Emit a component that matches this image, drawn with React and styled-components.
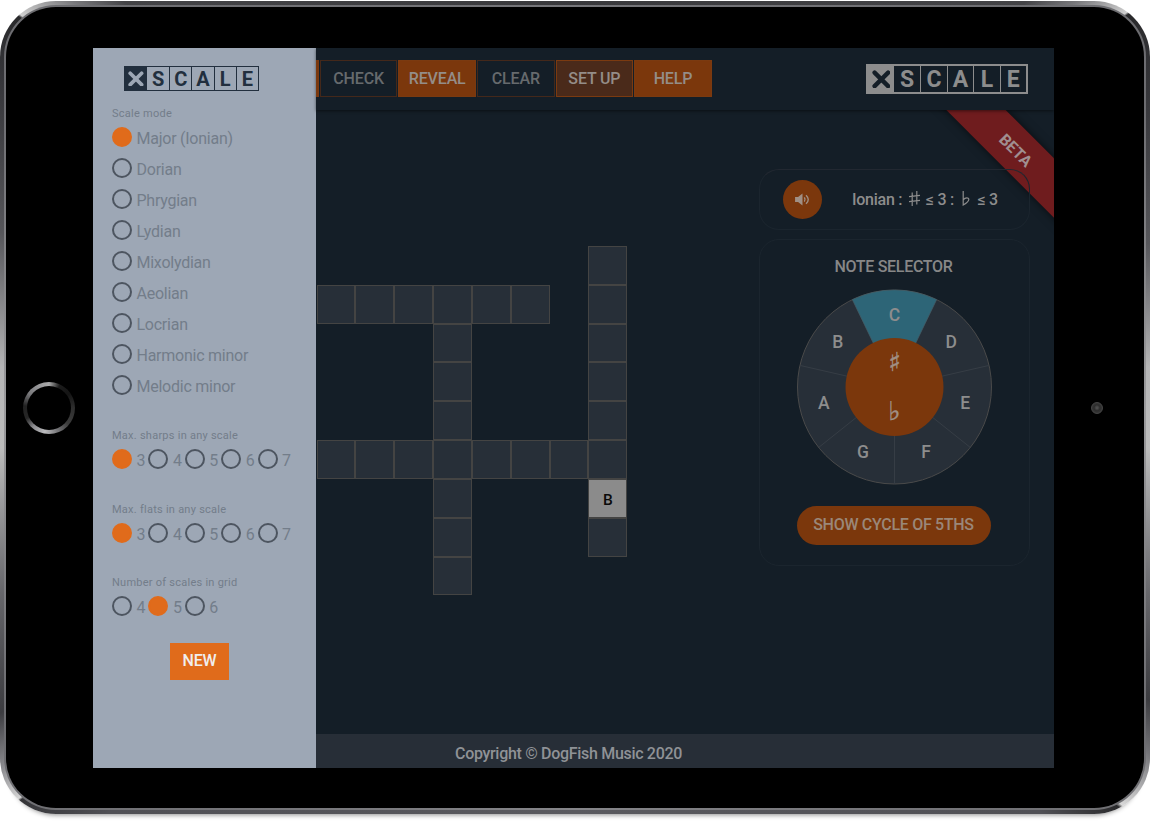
import React from "react";
import styled, { createGlobalStyle } from "styled-components";

const c = {
  night: "#141e27",
  slate: "#272f38",
  line: "#444443",
  orange: "#e06b1b",
  burnt: "#7b370c",
  text: "#8d8d8d",
  drawer: "#9da7b5",
  navy: "#222f3e",
};

const Global = createGlobalStyle`
  * { box-sizing: border-box; }
  body { margin: 0; background: #fff; font-family: Roboto, "Liberation Sans", sans-serif; overflow: hidden; }
`;

const Page = styled.div`
  width: 1152px;
  height: 830px;
  padding: 1px 0 0 0;
`;

const Frame = styled.div`
  width: 1150px;
  height: 813px;
  padding: 4px;
  border-radius: 56px;
  background: conic-gradient(
    #39393c 0deg, #444447 48deg, #77777a 51deg, #d0d0d0 54.4deg, #29292b 54.6deg,
    #38383c 62deg, #58585c 74deg, #b5b5b6 86deg, #bcbcbc 94deg, #68686c 108deg, #3c3c40 117deg,
    #747478 121deg, #d8d8d8 126deg, #29292b 126.3deg, #505055 131deg, #5a5a5f 180deg,
    #505055 229deg, #343437 234.7deg, #d4d4d4 234.9deg, #88888c 238deg, #3c3c40 242deg,
    #66666a 252deg, #bcbcbc 266deg, #b5b5b6 274deg, #56565a 287deg, #353539 300deg,
    #29292b 305.1deg, #d0d0d0 305.3deg, #77777a 309deg, #444447 312deg, #39393c 360deg
  );
  box-shadow: 0 9px 5px -8px rgba(0, 0, 0, 0.45);
`;

const Rim = styled.div`
  height: 100%;
  padding: 2px;
  border-radius: 52px;
  background: conic-gradient(#77777b 0deg, #6c6c70 62deg, #9b9b9d 90deg, #6c6c70 118deg, #858589 180deg, #6c6c70 242deg, #9b9b9d 270deg, #6c6c70 298deg, #77777b 360deg);
`;

const Glass = styled.div`
  height: 100%;
  display: grid;
  grid-template-columns: 87px 961px 1fr;
  padding-top: 41px;
  border-radius: 50px;
  background: #000;
`;

const Bezel = styled.div`
  display: flex;
  height: 719px;
  align-items: center;
  padding-left: ${(p) => p.$inset}px;
`;

const HomeButton = styled.div`
  width: 52px;
  height: 52px;
  padding: 4px;
  border-radius: 50%;
  background: conic-gradient(#aaa 0deg, #1c1c1c 25deg, #141414 55deg, #2e2e2e 90deg, #3c3c3c 130deg, #77777a 160deg, #bcbcbe 190deg, #8c8c90 220deg, #262626 245deg, #222 275deg, #77777a 305deg, #98989a 335deg, #aaa 360deg);
  &::after {
    content: "";
    display: block;
    height: 100%;
    border-radius: 50%;
    background: #000;
  }
`;

const Camera = styled.div`
  width: 12px;
  height: 12px;
  border-radius: 50%;
  border: 1px solid #464646;
  background: radial-gradient(circle at 50% 48%, #4c4c4c 0 12%, #2c2c2c 40%, #333 60%, #3c3c3c 100%);
`;

const Screen = styled.div`
  height: 720px;
  display: grid;
  grid-template-columns: 223px 738px;
  overflow: hidden;
  background: ${c.night};
`;

const Drawer = styled.aside`
  background: ${c.drawer};
  padding: 18px 0 0 19px;
`;

const Logo = styled.div`
  display: grid;
  width: ${(p) => (p.$small ? 135 : 162)}px;
  height: ${(p) => (p.$small ? 25 : 30)}px;
  grid-template-columns: ${(p) => (p.$small ? 22 : 26)}px repeat(5, 1fr);
  border: ${(p) => (p.$small ? 1.5 : 2)}px solid ${(p) => p.$ink};
  color: ${(p) => p.$ink};
  font-size: ${(p) => (p.$small ? 20 : 23)}px;
  font-weight: 700;
  ${(p) => p.$small && "margin-left: 12px;"}
`;

const LogoTile = styled.span`
  display: flex;
  align-items: center;
  justify-content: center;
  line-height: 1;
  & + & { border-left: 1.5px solid currentColor; }
`;

const LogoMark = styled.span`
  display: flex;
  align-items: center;
  justify-content: center;
  background: currentColor;
  svg { width: 72%; display: block; }
`;

const OptionGroup = styled.section`
  height: ${(p) => p.$height}px;
`;

const FirstGroup = styled.div`
  padding-top: 16px;
`;

const Caption = styled.div`
  font-size: 11px;
  line-height: 13px;
  letter-spacing: 0.25px;
  color: #737d8a;
`;

const Options = styled.div`
  display: flex;
  flex-direction: ${(p) => (p.$inline ? "row" : "column")};
  padding-top: 7px;
`;

const Option = styled.label`
  display: flex;
  align-items: center;
  gap: 4.5px;
  height: ${(p) => (p.$inline ? 20 : 31)}px;
  width: ${(p) => (p.$inline ? "36.4px" : "auto")};
  ${(p) => !p.$inline && "padding-bottom: 11px;"}
  font-size: 16px;
  letter-spacing: ${(p) => (p.$inline ? 0 : -0.25)}px;
  color: #737d8a;
  span { padding-top: 3px; line-height: 18px; white-space: nowrap; }
`;

const Radio = styled.i`
  flex: none;
  width: 20px;
  height: 20px;
  border-radius: 50%;
  border: 2px solid ${(p) => (p.$on ? c.orange : "#4d5560")};
  background: ${(p) => (p.$on ? c.orange : "transparent")};
`;

const NewButton = styled.button`
  display: block;
  width: 59px;
  height: 37px;
  margin-left: 58px;
  padding: 0 0 1px;
  border: 0;
  background: ${c.orange};
  color: #f0eeee;
  font: 500 16px Roboto, sans-serif;
  letter-spacing: -0.1px;
`;

const Main = styled.main`
  display: grid;
  grid-template-rows: 62px 1fr 34px;
  min-width: 0;
`;

const Header = styled.header`
  display: flex;
  justify-content: space-between;
  align-items: flex-start;
  padding: 12px 26px 0 0;
  box-shadow: 0 1px 3px rgba(0, 0, 0, 0.5);
  z-index: 1;
`;

const Toolbar = styled.nav`
  display: flex;
  gap: 1px;
`;

const fills = { solid: c.burnt, ghost: "transparent", active: "#4a2a1a" };

const ToolButton = styled.button`
  width: ${(p) => p.$width || 77.6}px;
  height: 37px;
  padding: 0 0 1px;
  border: 1px solid ${(p) => (p.$kind === "ghost" ? "#44281a" : "#7b3a10")};
  background: ${(p) => fills[p.$kind]};
  color: ${(p) => (p.$kind === "ghost" ? "#666a6d" : "#948d88")};
  font: 500 16px Roboto, sans-serif;
  letter-spacing: -0.15px;
`;

const LogoSlot = styled.div`
  padding-top: 4px;
`;

const Workspace = styled.div`
  position: relative;
  overflow: hidden;
  display: flex;
  justify-content: space-between;
`;

const Board = styled.div`
  display: grid;
  grid-template-columns: repeat(8, 38.85px);
  grid-template-rows: repeat(9, 38.82px);
  padding: 136px 0 0 0.5px;
`;

const Cell = styled.div`
  grid-column: ${(p) => p.$col};
  grid-row: ${(p) => p.$row};
  display: flex;
  align-items: center;
  justify-content: center;
  padding-top: 3px;
  border: 1px solid ${c.line};
  background: ${(p) => (p.$filled ? "#8b8b8b" : c.slate)};
  color: #0a0a0a;
  font-size: 15.5px;
  font-weight: 500;
`;

const Ribbon = styled.div`
  position: absolute;
  top: 19px;
  right: -62px;
  width: 200px;
  height: 42px;
  display: flex;
  align-items: center;
  justify-content: center;
  transform: rotate(45deg);
  background: #6f1c1e;
  color: #a08f90;
  font-size: 16px;
  font-weight: 700;
  box-shadow: 0 0 10px rgba(0, 0, 0, 0.6);
`;

const Side = styled.div`
  position: relative;
  width: 271px;
  margin: 59px 24px 0 0;
  display: flex;
  flex-direction: column;
  gap: 9px;
`;

const Card = styled.section`
  height: ${(p) => p.$height}px;
  border: 1px solid #1b252e;
  border-radius: 20px;
  color: ${c.text};
`;

const ScaleCard = styled(Card)`
  display: flex;
  align-items: center;
  padding-left: 23px;
  gap: 30px;
  border-top-color: #222831;
`;

const SoundButton = styled.button`
  width: 39px;
  height: 39px;
  display: flex;
  align-items: center;
  justify-content: center;
  padding: 0 0 1px;
  border: 0;
  border-radius: 50%;
  background: ${c.burnt};
`;

const ScaleText = styled.div`
  display: flex;
  align-items: center;
  font-size: 16px;
  font-weight: 500;
  letter-spacing: -0.25px;
  white-space: pre;
  line-height: 18px;
`;

const Accidental = styled.span`
  width: 16px;
  display: flex;
  justify-content: center;
  padding-bottom: 2px;
  svg { display: block; }
`;

const SelectorCard = styled(Card)`
  display: flex;
  flex-direction: column;
  align-items: center;
  padding-right: 2px;
`;

const Title = styled.h2`
  margin: 17px 0 0;
  font-size: 16px;
  line-height: 19px;
  font-weight: 500;
  letter-spacing: -0.3px;
  color: #878787;
`;

const Wheel = styled.svg`
  display: block;
  width: 196px;
  height: 196px;
  margin-top: 13px;
  text { text-anchor: middle; fill: ${c.text}; font-size: 17.5px; font-weight: 500; }
  .accidental { font-family: "DejaVu Sans", sans-serif; font-size: 26px; font-weight: 400; fill: #a09085; stroke: #a09085; stroke-width: 0.4; }
`;

const CycleButton = styled.button`
  width: 194px;
  height: 39px;
  margin-top: 21px;
  padding: 0 0 3px;
  border: 0;
  border-radius: 20px;
  background: ${c.burnt};
  color: #9a8779;
  font: 500 16px Roboto, sans-serif;
  letter-spacing: -0.3px;
`;

const Footer = styled.footer`
  display: flex;
  align-items: center;
  padding: 4px 0 0 139px;
  background: #272e37;
  color: #8f9296;
  font-size: 16px;
  font-weight: 500;
  letter-spacing: -0.31px;
`;

function XScaleLogo({ ink, hole, small }) {
  return (
    <Logo $ink={ink} $small={small}>
      <LogoMark>
        <svg viewBox="0 0 18 18">
          <path d="M2.5 2.5 15.5 15.5M15.5 2.5 2.5 15.5" stroke={hole} strokeWidth="4.2" strokeLinecap="round" />
        </svg>
      </LogoMark>
      {"SCALE".split("").map((l) => (
        <LogoTile key={l}>{l}</LogoTile>
      ))}
    </Logo>
  );
}

function Choices({ title, items, selected, inline, height }) {
  return (
    <OptionGroup $height={height}>
      <Caption>{title}</Caption>
      <Options $inline={inline}>
        {items.map((item) => (
          <Option key={item} $inline={inline}>
            <Radio $on={item === selected} />
            <span>{item}</span>
          </Option>
        ))}
      </Options>
    </OptionGroup>
  );
}

const SharpIcon = () => (
  <Accidental role="img" aria-label="sharp">
    <svg width="13" height="15" viewBox="0 0 13 15" stroke={c.text} fill="none" strokeWidth="1.2">
      <path d="M4.2 1.5V15M8.8 0V13.5M1 5.6 12 4.4M1 10.6 12 9.4" />
    </svg>
  </Accidental>
);

const FlatIcon = () => (
  <Accidental role="img" aria-label="flat">
    <svg width="8" height="15" viewBox="0 0 8 15" stroke={c.text} fill="none" strokeWidth="1.2">
      <path d="M1.2 0V14Q6.8 10.6 6.8 8.4C6.8 6.4 3.4 6.2 1.2 8.8" />
    </svg>
  </Accidental>
);

const modes = ["Major (Ionian)", "Dorian", "Phrygian", "Lydian", "Mixolydian", "Aeolian", "Locrian", "Harmonic minor", "Melodic minor"];

const cells = new Map();
const add = (col, row, value = "") => cells.set(col + "-" + row, { col, row, value });
for (let i = 1; i <= 6; i++) add(i, 2);
for (let i = 1; i <= 8; i++) add(i, 6);
for (let i = 2; i <= 9; i++) add(4, i);
for (let i = 1; i <= 8; i++) add(8, i, i === 7 ? "B" : "");

const notes = "CDEFGAB".split("");
const at = (turn, r) => {
  const a = (turn * 2 * Math.PI) / 7;
  return [98.5 + r * Math.sin(a), 98 - r * Math.cos(a)];
};

function NoteWheel() {
  return (
    <Wheel viewBox="0 0 196 196">
      <circle cx="98.5" cy="98" r="97" fill={c.slate} stroke="#4a4a4a" />
      {notes.map((n, i) => {
        const [x, y] = at(i + 0.5, 97);
        return <path key={n} d={`M98.5 98L${x} ${y}`} stroke="#363d45" />;
      })}
      <path d={`M98.5 98L${at(-0.5, 97).join(" ")}A97 97 0 0 1 ${at(0.5, 97).join(" ")}Z`} fill="#2d6577" stroke="#44606a" strokeWidth="0.6" />
      <circle cx="98.5" cy="98" r="49" fill={c.burnt} />
      {notes.map((n, i) => {
        const [x, y] = at(i, 72.5);
        return <text key={n} x={x} y={y + 6}>{n}</text>;
      })}
      <text className="accidental" x="98.5" y="82">♯</text>
      <text className="accidental" x="98.5" y="131">♭</text>
    </Wheel>
  );
}

export default function App() {
  return (
    <Page>
      <Global />
      <Frame>
        <Rim>
          <Glass>
            <Bezel $inset={16.5}><HomeButton /></Bezel>
            <Screen>
              <Drawer>
                <XScaleLogo small ink={c.navy} hole={c.drawer} />
                <FirstGroup>
                  <Choices title="Scale mode" items={modes} selected="Major (Ionian)" height={322} />
                </FirstGroup>
                <Choices inline title="Max. sharps in any scale" items={["3", "4", "5", "6", "7"]} selected="3" height={74} />
                <Choices inline title="Max. flats in any scale" items={["3", "4", "5", "6", "7"]} selected="3" height={73.4} />
                <Choices inline title="Number of scales in grid" items={["4", "5", "6"]} selected="5" height={66.6} />
                <NewButton>NEW</NewButton>
              </Drawer>
              <Main>
                <Header>
                  <Toolbar>
                    <ToolButton $kind="solid" $width={2.8} aria-label="New" />
                    <ToolButton $kind="ghost">CHECK</ToolButton>
                    <ToolButton $kind="solid">REVEAL</ToolButton>
                    <ToolButton $kind="ghost">CLEAR</ToolButton>
                    <ToolButton $kind="active">SET UP</ToolButton>
                    <ToolButton $kind="solid">HELP</ToolButton>
                  </Toolbar>
                  <LogoSlot><XScaleLogo ink="#8d8d8d" hole={c.night} /></LogoSlot>
                </Header>
                <Workspace>
                  <Board>
                    {[...cells.values()].map(({ col, row, value }) => (
                      <Cell key={col + "-" + row} $col={col} $row={row} $filled={!!value}>{value}</Cell>
                    ))}
                  </Board>
                  <Ribbon>BETA</Ribbon>
                  <Side>
                    <ScaleCard $height={61}>
                      <SoundButton aria-label="Play scale">
                        <svg width="15" height="13" viewBox="0 0 16 14">
                          <path d="M0 4.2h3.2L8 .5v13L3.2 9.8H0z" fill="#a09085" />
                          <path d="M10 4.8q1.6 2.2 0 4.4M11.8 2.3q4.8 4.7 0 9.4" fill="none" stroke="#a09085" strokeWidth="1.5" />
                        </svg>
                      </SoundButton>
                      <ScaleText>
                        {"Ionian : "}<SharpIcon />{" ≤ 3 : "}<FlatIcon />{" ≤ 3"}
                      </ScaleText>
                    </ScaleCard>
                    <SelectorCard $height={327}>
                      <Title>NOTE SELECTOR</Title>
                      <NoteWheel />
                      <CycleButton>SHOW CYCLE OF 5THS</CycleButton>
                    </SelectorCard>
                  </Side>
                </Workspace>
                <Footer>Copyright © DogFish Music 2020</Footer>
              </Main>
            </Screen>
            <Bezel $inset={36.5}><Camera /></Bezel>
          </Glass>
        </Rim>
      </Frame>
    </Page>
  );
}
